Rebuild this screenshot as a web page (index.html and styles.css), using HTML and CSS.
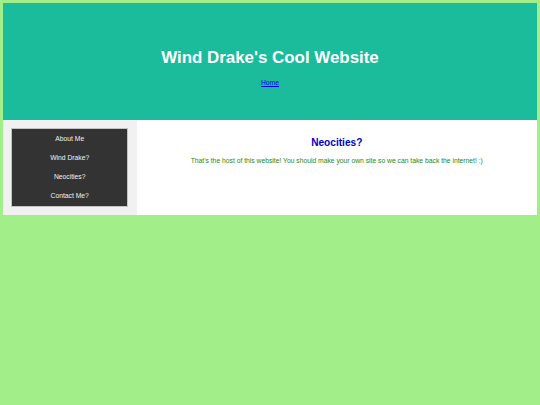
FILE: index.html
```html
<!DOCTYPE html>
<html>
<head>
<meta charset="utf-8">
<title>Wind Drake's Cool Website</title>
<link rel="stylesheet" href="styles.css">
</head>
<body>
<div class="page">
  <header class="header">
    <h1 class="title">Wind Drake's Cool Website</h1>
    <p class="home"><a href="#">Home</a></p>
  </header>
  <div class="row">
    <aside class="side">
      <nav class="menu">
        <a class="menu-item" href="#">About Me</a>
        <a class="menu-item" href="#">Wind Drake?</a>
        <a class="menu-item" href="#">Neocities?</a>
        <a class="menu-item" href="#">Contact Me?</a>
      </nav>
    </aside>
    <main class="main">
      <h2 class="main-title">Neocities?</h2>
      <p class="main-text">That's the host of this website! You should make your own site so we can take back the internet! :)</p>
    </main>
  </div>
</div>
</body>
</html>
```
FILE: styles.css
```css
html, body {
  margin: 0;
  padding: 0;
}
body {
  background: #a2ef8a;
  font-family: "Liberation Sans", Arial, sans-serif;
  font-size: 6.75px;
  padding: 3px;
}
.page {
  display: flex;
  flex-direction: column;
}
.header {
  background: #1abc9c;
  text-align: center;
  padding: 45.3px 10px 33.2px;
}
.title {
  margin: 0 0 11.3px;
  font-size: 16.9px;
  font-weight: bold;
  color: #ffffff;
  line-height: 1.15;
}
.home {
  margin: 0;
  line-height: 1.15;
}
.home a {
  color: #0000ee;
}
.row {
  display: flex;
}
.side {
  width: 25%;
  background: #f1f1f1;
  padding: 8.4px;
  box-sizing: border-box;
}
.menu {
  display: flex;
  flex-direction: column;
  background: #333333;
  border: 1px solid #c4c4c4;
}
.menu-item {
  display: block;
  color: #f2f2f2;
  text-decoration: none;
  text-align: center;
  padding: 5.7px 0;
  line-height: 1.15;
}
.main {
  flex: 1;
  background: #ffffff;
  padding: 8.4px;
  text-align: center;
}
.main-title {
  margin: 8.4px 0;
  font-size: 10.125px;
  color: #0000cd;
  line-height: 1.15;
}
.main-text {
  margin: 8.4px 0;
  color: #228b22;
  line-height: 1.15;
}
```
